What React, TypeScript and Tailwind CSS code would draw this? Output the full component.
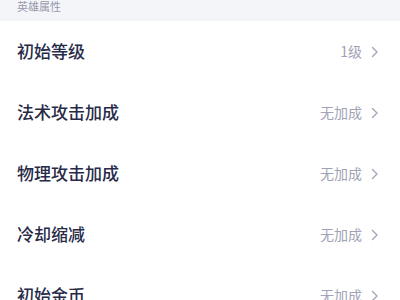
import React from "react";

const rows = [
  { label: "初始等级", value: "1级" },
  { label: "法术攻击加成", value: "无加成" },
  { label: "物理攻击加成", value: "无加成" },
  { label: "冷却缩减", value: "无加成" },
  { label: "初始金币", value: "无加成" },
];

function Chevron() {
  return (
    <svg width="8" height="12" viewBox="0 0 8 12" fill="none" className="ml-[9px]">
      <path d="M1.5 1.5L6 6L1.5 10.5" stroke="#a4a6b8" strokeWidth="1.4" strokeLinecap="round" strokeLinejoin="round" />
    </svg>
  );
}

export default function App() {
  return (
    <div
      className="w-[400px] h-[300px] overflow-hidden bg-white"
      style={{ fontFamily: '"Noto Sans CJK SC", "Noto Sans", sans-serif' }}
    >
      <div className="h-[21px] bg-[#f4f5f9] pl-[17px] flex items-start">
        <span className="text-[11px] leading-[13px] text-[#9698ad]">英雄属性</span>
      </div>
      {rows.map((r) => (
        <div key={r.label} className="h-[61px] flex items-center pl-[17px] pr-[21px]">
          <span className="text-[17px] font-medium text-[#272a48] flex-1 -mt-[1px]">{r.label}</span>
          <span className="text-[14px] text-[#a0a2b6] -mt-[1px]">{r.value}</span>
          <Chevron />
        </div>
      ))}
    </div>
  );
}
